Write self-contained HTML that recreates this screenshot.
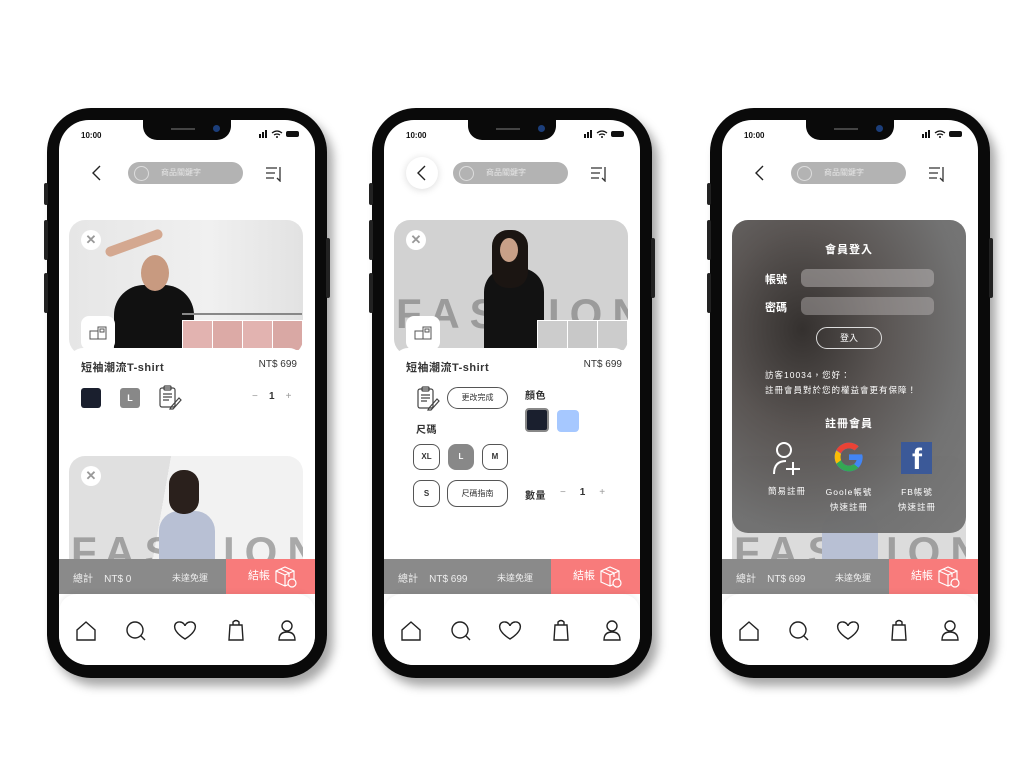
<!DOCTYPE html>
<html><head><meta charset="utf-8">
<style>
*{margin:0;padding:0;box-sizing:border-box}
body{width:1036px;height:783px;background:#fff;position:relative;overflow:hidden;font-family:"Liberation Sans","Noto Sans CJK TC",sans-serif;color:#333}
.ph{position:absolute;top:108px;width:280px;height:570px;border-radius:44px;background:#0a0a0a;box-shadow:6px 8px 10px rgba(0,0,0,.35)}
.btn{position:absolute;background:#222;width:4px;border-radius:2px}
.sc{position:absolute;left:12px;top:12px;width:256px;height:545px;border-radius:30px;background:#fff;overflow:hidden}
.notch{position:absolute;left:84px;top:0;width:88px;height:20px;background:#0a0a0a;border-radius:0 0 14px 14px}
.notch:before{content:"";position:absolute;left:28px;top:8px;width:24px;height:2px;background:#444}
.notch:after{content:"";position:absolute;left:70px;top:5px;width:7px;height:7px;border-radius:50%;background:#1c3e7a}
.a{position:absolute}
.time{left:22px;top:11px;font-size:8px;font-weight:bold;color:#111}
.srch{left:69px;top:42px;width:115px;height:22px;border-radius:11px;background:#b3b3b3;color:#e6e6e6;font-size:8px;line-height:22px;padding-left:33px}
.srch:before{content:"";position:absolute;left:6px;top:4px;width:13px;height:13px;border:1.5px solid #ddd;border-radius:50%}
.img{border-radius:16px;overflow:hidden}
.x{width:20px;height:20px;border-radius:50%;background:#fff;color:#999;font-size:13px;text-align:center;line-height:20px;font-weight:bold}
.t{font-size:11px;font-weight:bold;letter-spacing:.5px;color:#333}
.bar{left:0;top:439px;width:256px;height:35px;background:#8a8a8a;color:#eee;font-size:10px}
.pay{position:absolute;right:0;top:0;width:89px;height:35px;background:#f87b7b;color:#fff;font-size:11px;line-height:35px;padding-left:22px}
.nav{left:0;top:474px;width:256px;height:71px;background:#fff;border-radius:18px 18px 0 0;box-shadow:0 -2px 6px rgba(0,0,0,.06)}
.fash{font-size:42px;font-weight:bold;color:rgba(110,110,110,.55);letter-spacing:10px;white-space:nowrap}
.sb{border:1px solid #555;border-radius:8px;font-size:8px;font-weight:bold;text-align:center;color:#333}
.w{color:#fff}
</style></head><body>

<svg width="0" height="0" style="position:absolute">
<defs>
<g id="navi" fill="none" stroke="#222" stroke-width="1.4">
<path d="M18 23 V13 L27 5 L36 13 V23 Z"/>
<circle cx="76" cy="13" r="8"/><path d="M82 19 L86 23"/>
<path d="M126 22 C110 12 116 4 121 5 C124 5 126 8 126 9 C126 8 128 5 131 5 C136 4 142 12 126 22Z"/>
<path d="M171 8 H183 L184 23 H170 Z M174 8 V5 Q177 2 180 5 V8"/>
<circle cx="228" cy="9" r="5"/><path d="M220 23 Q220 15 228 15 Q236 15 236 23 Z"/>
</g>
<g id="clip" fill="none" stroke="#444" stroke-width="1.2">
<rect x="1" y="3" width="15" height="19" rx="2"/><rect x="5" y="1" width="7" height="4" rx="1"/>
<path d="M4 9 H13 M4 12 H13 M4 15 H10"/><path d="M12 22 L20 13 L22 15 L14 24 L11 24 Z"/>
</g>
<g id="box" fill="none" stroke="#fff" stroke-width="1.2">
<path d="M2 6 L11 2 L20 6 V17 L11 21 L2 17 Z M2 6 L11 10 L20 6 M11 10 V21 M6 4 L15 8 V12"/><circle cx="18" cy="18" r="4" fill="#f87b7b"/>
</g>
<g id="mini" fill="none" stroke="#555" stroke-width="1"><rect x="1" y="6" width="8" height="8"/><rect x="9" y="2" width="8" height="12"/><rect x="11" y="4" width="4" height="3"/></g>
</defs></svg>

<!-- ========== PHONE 1 ========== -->
<div class="ph" style="left:47px">
<div class="btn" style="left:-3px;top:75px;height:22px"></div>
<div class="btn" style="left:-3px;top:112px;height:40px"></div>
<div class="btn" style="left:-3px;top:165px;height:40px"></div>
<div class="btn" style="right:-3px;top:130px;height:60px"></div>
<div class="sc">
<div class="notch"></div>
<div class="a time">10:00</div>
<svg class="a" style="left:198px;top:10px" width="46" height="8"><rect x="2" y="4" width="2" height="4" fill="#111"/><rect x="5" y="2" width="2" height="6" fill="#111"/><rect x="8" y="0" width="2" height="8" fill="#111"/><path d="M15 3 Q20 -1 25 3 M17 5 Q20 3 23 5" stroke="#111" fill="none" stroke-width="1.2"/><circle cx="20" cy="7" r="1" fill="#111"/><rect x="29" y="1" width="13" height="6" rx="2" fill="#111"/></svg>
<svg class="a" style="left:32px;top:45px" width="12" height="16"><path d="M9 1 L2 8 L9 15" fill="none" stroke="#222" stroke-width="1.4"/></svg>
<div class="a srch">商品關鍵字</div>
<svg class="a" style="left:206px;top:46px" width="18" height="16"><path d="M1 2 H12 M1 7 H10 M1 12 H9 M15 1 V15 L12 12" fill="none" stroke="#333" stroke-width="1.3"/></svg>

<div class="a img" style="left:10px;top:100px;width:234px;height:135px;background:linear-gradient(90deg,#e6e6e6,#f0f0f0 60%,#e2e2e2)">
<div class="a" style="left:45px;top:65px;width:80px;height:80px;background:#111;border-radius:30px 30px 0 0"></div>
<div class="a" style="left:72px;top:35px;width:28px;height:36px;background:#c89a80;border-radius:50%"></div>
<div class="a" style="left:35px;top:18px;width:60px;height:10px;background:#d4a890;transform:rotate(-20deg);border-radius:5px"></div>
<div class="a" style="left:113px;top:93px;width:120px;height:2px;background:#888"></div>
<div class="a" style="left:113px;top:100px;width:121px;height:31px;background:#fff;display:flex;gap:1px;padding:1px">
<div style="flex:1;background:#e2b3b0"></div><div style="flex:1;background:#dcaaa6"></div><div style="flex:1;background:#e2b3b0"></div><div style="flex:1;background:#d9a8a4"></div></div>
<div class="a" style="left:12px;top:96px;width:34px;height:34px;background:#fff;border-radius:8px"><svg class="a" style="left:8px;top:9px" width="18" height="16"><use href="#mini"/></svg></div>
</div>
<div class="a x" style="left:22px;top:110px">✕</div>
<div class="a" style="left:10px;top:228px;width:234px;height:80px;background:#fff;border-radius:14px 14px 0 0"></div>
<div class="a t" style="left:22px;top:239px">短袖潮流T-shirt</div>
<div class="a" style="right:18px;top:239px;font-size:10px">NT$ 699</div>
<div class="a" style="left:22px;top:268px;width:20px;height:20px;background:#1a1f2e;border-radius:3px"></div>
<div class="a" style="left:61px;top:268px;width:20px;height:20px;background:#888;border-radius:3px;color:#fff;font-size:9px;text-align:center;line-height:20px;font-weight:bold">L</div>
<svg class="a" style="left:100px;top:265px" width="24" height="26"><use href="#clip"/></svg>
<div class="a" style="left:193px;top:271px;font-size:10px;color:#999">−&nbsp;&nbsp;&nbsp;&nbsp;<b style="color:#333">1</b>&nbsp;&nbsp;&nbsp;&nbsp;+</div>

<div class="a img" style="left:10px;top:336px;width:234px;height:120px;background:linear-gradient(100deg,#e0e0e0 40%,#f2f2f2 40%,#f2f2f2 100%)">
<div class="a fash" style="left:2px;top:72px">FASHION</div>
<div class="a" style="left:90px;top:55px;width:56px;height:70px;background:#b8c0d4;border-radius:20px 20px 0 0"></div>
<div class="a" style="left:100px;top:14px;width:30px;height:44px;background:#2a201c;border-radius:14px"></div>
</div>
<div class="a x" style="left:22px;top:346px">✕</div>

<div class="a bar"><span class="a" style="left:14px;top:11px">總計&nbsp;&nbsp;&nbsp;&nbsp;NT$ 0</span><span class="a" style="left:113px;top:12px;font-size:9px">未達免運</span>
<div class="pay">結帳<svg class="a" style="left:48px;top:6px" width="24" height="24"><use href="#box"/></svg></div></div>
<div class="a nav"><svg class="a" style="left:0;top:23px" width="256" height="28"><use href="#navi"/></svg></div>
</div></div>

<!-- ========== PHONE 2 ========== -->
<div class="ph" style="left:372px">
<div class="btn" style="left:-3px;top:75px;height:22px"></div>
<div class="btn" style="left:-3px;top:112px;height:40px"></div>
<div class="btn" style="left:-3px;top:165px;height:40px"></div>
<div class="btn" style="right:-3px;top:130px;height:60px"></div>
<div class="sc">
<div class="notch"></div>
<div class="a time">10:00</div>
<svg class="a" style="left:198px;top:10px" width="46" height="8"><rect x="2" y="4" width="2" height="4" fill="#111"/><rect x="5" y="2" width="2" height="6" fill="#111"/><rect x="8" y="0" width="2" height="8" fill="#111"/><path d="M15 3 Q20 -1 25 3 M17 5 Q20 3 23 5" stroke="#111" fill="none" stroke-width="1.2"/><circle cx="20" cy="7" r="1" fill="#111"/><rect x="29" y="1" width="13" height="6" rx="2" fill="#111"/></svg>
<div class="a" style="left:22px;top:37px;width:32px;height:32px;border-radius:50%;background:#fff;box-shadow:0 1px 8px rgba(0,0,0,.15)"></div>
<svg class="a" style="left:32px;top:45px" width="12" height="16"><path d="M9 1 L2 8 L9 15" fill="none" stroke="#222" stroke-width="1.4"/></svg>
<div class="a srch">商品關鍵字</div>
<svg class="a" style="left:206px;top:46px" width="18" height="16"><path d="M1 2 H12 M1 7 H10 M1 12 H9 M15 1 V15 L12 12" fill="none" stroke="#333" stroke-width="1.3"/></svg>

<div class="a img" style="left:10px;top:100px;width:234px;height:135px;background:#d2d2d2">
<div class="a fash" style="left:2px;top:70px">FASHION</div>
<div class="a" style="left:90px;top:48px;width:60px;height:90px;background:#121212;border-radius:24px 24px 0 0"></div>
<div class="a" style="left:98px;top:10px;width:36px;height:58px;background:#1b1512;border-radius:16px"></div>
<div class="a" style="left:106px;top:18px;width:18px;height:24px;background:#c8a088;border-radius:50%"></div>
<div class="a" style="left:143px;top:100px;width:91px;height:31px;background:#fff;display:flex;gap:1px;padding:1px">
<div style="flex:1;background:#ccc"></div><div style="flex:1;background:#c8c8c8"></div><div style="flex:1;background:#ccc"></div></div>
<div class="a" style="left:12px;top:96px;width:34px;height:34px;background:#fff;border-radius:8px"><svg class="a" style="left:8px;top:9px" width="18" height="16"><use href="#mini"/></svg></div>
</div>
<div class="a x" style="left:22px;top:110px">✕</div>
<div class="a" style="left:10px;top:228px;width:234px;height:30px;background:#fff;border-radius:14px 14px 0 0"></div>
<div class="a t" style="left:22px;top:239px">短袖潮流T-shirt</div>
<div class="a" style="right:18px;top:239px;font-size:10px">NT$ 699</div>

<svg class="a" style="left:33px;top:266px" width="24" height="26"><use href="#clip"/></svg>
<div class="a sb" style="left:63px;top:267px;width:61px;height:22px;line-height:20px;font-weight:normal;border-radius:11px">更改完成</div>
<div class="a t" style="left:141px;top:267px;font-size:10px">顏色</div>
<div class="a" style="left:141px;top:288px;width:24px;height:24px;background:#1a1f2e;border:2px solid #888;border-radius:4px"></div>
<div class="a" style="left:173px;top:290px;width:22px;height:22px;background:#a6c8ff;border-radius:4px"></div>
<div class="a t" style="left:32px;top:301px;font-size:10px">尺碼</div>
<div class="a sb" style="left:29px;top:324px;width:27px;height:26px;line-height:24px">XL</div>
<div class="a sb" style="left:64px;top:324px;width:26px;height:26px;line-height:24px;background:#888;border-color:#888;color:#fff">L</div>
<div class="a sb" style="left:98px;top:324px;width:26px;height:26px;line-height:24px">M</div>
<div class="a sb" style="left:29px;top:360px;width:27px;height:27px;line-height:25px">S</div>
<div class="a sb" style="left:63px;top:360px;width:61px;height:27px;line-height:25px;font-weight:normal;border-radius:10px">尺碼指南</div>
<div class="a t" style="left:141px;top:367px;font-size:10px">數量</div>
<div class="a" style="left:176px;top:367px;font-size:10px;color:#999">−&nbsp;&nbsp;&nbsp;&nbsp;&nbsp;<b style="color:#333">1</b>&nbsp;&nbsp;&nbsp;&nbsp;&nbsp;+</div>

<div class="a bar"><span class="a" style="left:14px;top:11px">總計&nbsp;&nbsp;&nbsp;&nbsp;NT$ 699</span><span class="a" style="left:113px;top:12px;font-size:9px">未達免運</span>
<div class="pay">結帳<svg class="a" style="left:48px;top:6px" width="24" height="24"><use href="#box"/></svg></div></div>
<div class="a nav"><svg class="a" style="left:0;top:23px" width="256" height="28"><use href="#navi"/></svg></div>
</div></div>

<!-- ========== PHONE 3 ========== -->
<div class="ph" style="left:710px">
<div class="btn" style="left:-3px;top:75px;height:22px"></div>
<div class="btn" style="left:-3px;top:112px;height:40px"></div>
<div class="btn" style="left:-3px;top:165px;height:40px"></div>
<div class="btn" style="right:-3px;top:130px;height:60px"></div>
<div class="sc">
<div class="notch"></div>
<div class="a time">10:00</div>
<svg class="a" style="left:198px;top:10px" width="46" height="8"><rect x="2" y="4" width="2" height="4" fill="#111"/><rect x="5" y="2" width="2" height="6" fill="#111"/><rect x="8" y="0" width="2" height="8" fill="#111"/><path d="M15 3 Q20 -1 25 3 M17 5 Q20 3 23 5" stroke="#111" fill="none" stroke-width="1.2"/><circle cx="20" cy="7" r="1" fill="#111"/><rect x="29" y="1" width="13" height="6" rx="2" fill="#111"/></svg>
<svg class="a" style="left:32px;top:45px" width="12" height="16"><path d="M9 1 L2 8 L9 15" fill="none" stroke="#222" stroke-width="1.4"/></svg>
<div class="a srch">商品關鍵字</div>
<svg class="a" style="left:206px;top:46px" width="18" height="16"><path d="M1 2 H12 M1 7 H10 M1 12 H9 M15 1 V15 L12 12" fill="none" stroke="#333" stroke-width="1.3"/></svg>

<div class="a img" style="left:10px;top:336px;width:234px;height:120px;background:#dcdcdc">
<div class="a fash" style="left:2px;top:72px">FASHION</div>
<div class="a" style="left:90px;top:55px;width:56px;height:70px;background:#b8c0d4;border-radius:20px 20px 0 0"></div>
</div>

<div class="a" style="left:10px;top:100px;width:234px;height:313px;border-radius:16px;background:radial-gradient(ellipse at 30% 35%,#2e2a28 0%,#55504e 35%,#6e6e6e 70%,#777 100%);opacity:.97"></div>
<div class="a w" style="left:10px;top:121px;width:234px;text-align:center;font-size:11px;font-weight:bold;letter-spacing:1px">會員登入</div>
<div class="a w" style="left:43px;top:151px;font-size:11px;font-weight:bold">帳號</div>
<div class="a" style="left:79px;top:149px;width:133px;height:18px;border-radius:6px;background:rgba(200,195,195,.45)"></div>
<div class="a w" style="left:43px;top:179px;font-size:11px;font-weight:bold">密碼</div>
<div class="a" style="left:79px;top:177px;width:133px;height:18px;border-radius:6px;background:rgba(200,195,195,.4)"></div>
<div class="a w" style="left:94px;top:207px;width:66px;height:22px;border:1px solid #ddd;border-radius:11px;text-align:center;line-height:20px;font-size:9px">登入</div>
<div class="a w" style="left:43px;top:248px;font-size:8.5px;letter-spacing:1px;line-height:15px">訪客10034，您好：<br>註冊會員對於您的權益會更有保障！</div>
<div class="a w" style="left:10px;top:295px;width:234px;text-align:center;font-size:11px;font-weight:bold;letter-spacing:1px">註冊會員</div>
<svg class="a" style="left:50px;top:321px" width="30" height="34" fill="none" stroke="#fff" stroke-width="2"><circle cx="12" cy="9" r="7"/><path d="M2 33 Q2 20 14 20 M14 28 H28 M21 21 V35"/></svg>
<svg class="a" style="left:111px;top:321px" width="32" height="32" viewBox="0 0 48 48"><path d="M43.6 20H24v8.5h11.3C34 33.7 29.5 37 24 37c-7.2 0-13-5.8-13-13s5.8-13 13-13c3.2 0 6.1 1.2 8.4 3.1l6.1-6.1C34.6 4.6 29.6 2.5 24 2.5 12.1 2.5 2.5 12.1 2.5 24S12.1 45.5 24 45.5c11 0 20.5-8 20.5-21.5 0-1.3-.3-2.7-.9-4z" fill="#4285f4"/><path d="M5 13.5l7 5.1C13.9 14.1 18.6 11 24 11c3.2 0 6.1 1.2 8.4 3.1l6.1-6.1C34.6 4.6 29.6 2.5 24 2.5 15.8 2.5 8.7 7.1 5 13.5z" fill="#ea4335"/><path d="M24 45.5c5.5 0 10.4-1.9 14.2-5.3l-6.6-5.6C29.5 36.1 26.9 37 24 37c-5.5 0-10.1-3.5-11.9-8.4l-7 5.4C8.6 40.8 15.7 45.5 24 45.5z" fill="#34a853"/><path d="M12.1 28.6c-.5-1.4-.8-3-.8-4.6s.3-3.2.8-4.6l-7-5.1C3.4 17.2 2.5 20.5 2.5 24s.9 6.8 2.5 9.9z" fill="#fbbc05"/></svg>
<div class="a" style="left:179px;top:322px;width:31px;height:32px;background:#3b5998;color:#fff;font-size:30px;font-weight:bold;overflow:hidden"><span class="a" style="left:11px;top:2px;line-height:32px">f</span></div>
<div class="a w" style="left:40px;top:365px;width:50px;text-align:center;font-size:8.5px;letter-spacing:1px">簡易註冊</div>
<div class="a w" style="left:97px;top:365px;width:60px;text-align:center;font-size:8.5px;letter-spacing:1px;line-height:15px">Goole帳號<br>快速註冊</div>
<div class="a w" style="left:165px;top:365px;width:60px;text-align:center;font-size:8.5px;letter-spacing:1px;line-height:15px">FB帳號<br>快速註冊</div>

<div class="a bar"><span class="a" style="left:14px;top:11px">總計&nbsp;&nbsp;&nbsp;&nbsp;NT$ 699</span><span class="a" style="left:113px;top:12px;font-size:9px">未達免運</span>
<div class="pay">結帳<svg class="a" style="left:48px;top:6px" width="24" height="24"><use href="#box"/></svg></div></div>
<div class="a nav"><svg class="a" style="left:0;top:23px" width="256" height="28"><use href="#navi"/></svg></div>
</div></div>

</body></html>
